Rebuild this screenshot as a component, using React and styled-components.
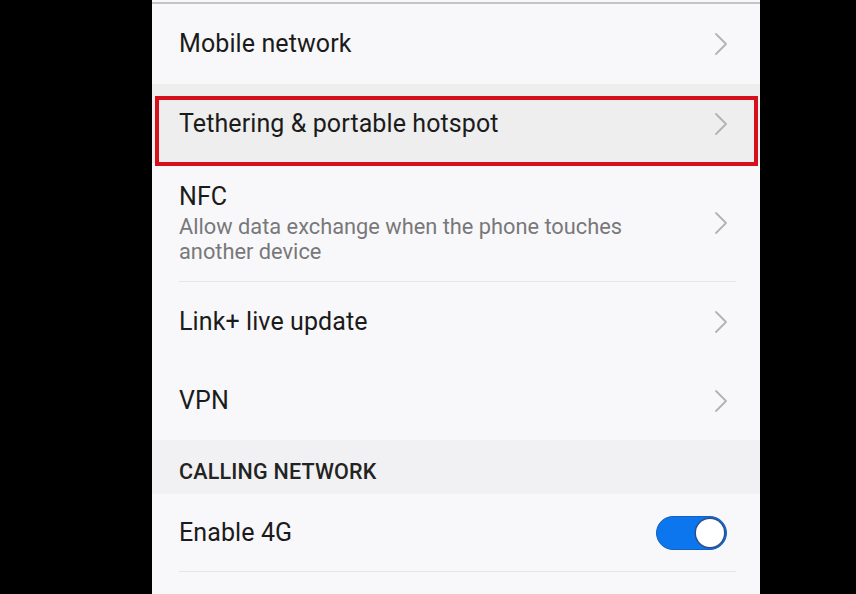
import React from 'react';
import styled, { createGlobalStyle } from 'styled-components';

const GlobalStyle = createGlobalStyle`
  html, body {
    margin: 0;
    padding: 0;
    background: #000;
  }
  body {
    font-family: Roboto, "Noto Sans", "Liberation Sans", sans-serif;
  }
`;

const Stage = styled.div`
  display: flex;
  width: 856px;
  height: 594px;
  padding-left: 152px;
  box-sizing: border-box;
  background: #000;
  overflow: hidden;
`;

const Screen = styled.div`
  display: flex;
  flex-direction: column;
  width: 608px;
  height: 100%;
  background: #f8f8fa;
`;

const TopEdge = styled.div`
  height: 2px;
  margin-top: 2px;
  background: #c4c4c6;
  flex: none;
`;

const Row = styled.div`
  position: relative;
  display: flex;
  align-items: center;
  flex: none;
  height: ${(props) => props.h || 79}px;
  padding: 0 32px 0 27px;
  background: ${(props) => (props.pressed ? '#eeeeef' : 'transparent')};
  box-sizing: border-box;
  &::after {
    content: '';
    display: ${(props) => (props.divider ? 'block' : 'none')};
    position: absolute;
    left: 27px;
    right: 24px;
    bottom: 0;
    height: 1px;
    background: #e6e6e9;
  }
`;

const TextBlock = styled.div`
  display: flex;
  flex-direction: column;
  flex: 1;
  min-width: 0;
`;

const Title = styled.div`
  font-size: 25px;
  line-height: 30px;
  color: #1b1b1b;
  letter-spacing: 0.1px;
`;

const Subtitle = styled.div`
  font-size: 21.8px;
  line-height: 25px;
  color: #78787a;
  margin-top: 2px;
  width: 480px;
`;

const SectionHeader = styled.div`
  display: flex;
  align-items: flex-end;
  flex: none;
  height: 54px;
  padding: 0 27px 10px;
  box-sizing: border-box;
  background: #f1f1f3;
  font-size: 21.5px;
  font-weight: 500;
  color: #232323;
  letter-spacing: 0.2px;
`;

const Marker = styled.div`
  position: absolute;
  left: 3px;
  right: 2px;
  top: 12px;
  height: 70px;
  border: 4px solid #d5101c;
  box-sizing: border-box;
  pointer-events: none;
`;

const Chevron = styled.svg`
  flex: none;
  width: 14px;
  height: 24px;
`;

const Toggle = styled.div`
  display: flex;
  align-items: center;
  justify-content: flex-end;
  flex: none;
  width: 71px;
  height: 34px;
  margin-right: 1px;
  padding: 0 2px;
  box-sizing: border-box;
  border-radius: 17px;
  background: #0b76ee;
  border: 1px solid #1a5fc0;
`;

const Knob = styled.div`
  width: 28px;
  height: 28px;
  border-radius: 50%;
  background: #fff;
  box-shadow: 0 0 0 1.5px #2a4f86;
`;

const Arrow = () => (
  <Chevron viewBox="0 0 14 24">
    <path d="M2 2 L12 12 L2 22" fill="none" stroke="#b3b3b5" strokeWidth="1.8" strokeLinecap="round" strokeLinejoin="round" />
  </Chevron>
);

const items = [
  { title: 'Mobile network', h: 80 },
  { title: 'Tethering & portable hotspot', h: 79, pressed: true },
  { title: 'NFC', sub: 'Allow data exchange when the phone touches another device', h: 119, divider: true },
  { title: 'Link+ live update', h: 79 },
  { title: 'VPN', h: 79 },
];

export default function App() {
  return (
    <Stage>
      <GlobalStyle />
      <Screen>
        <TopEdge />
        {items.map((item) => (
          <Row key={item.title} h={item.h} pressed={item.pressed} divider={item.divider}>
            <TextBlock>
              <Title>{item.title}</Title>
              {item.sub && <Subtitle>{item.sub}</Subtitle>}
            </TextBlock>
            <Arrow />
            {item.pressed && <Marker />}
          </Row>
        ))}
        <SectionHeader>CALLING NETWORK</SectionHeader>
        <Row h={78} divider>
          <TextBlock>
            <Title>Enable 4G</Title>
          </TextBlock>
          <Toggle>
            <Knob />
          </Toggle>
        </Row>
      </Screen>
    </Stage>
  );
}
